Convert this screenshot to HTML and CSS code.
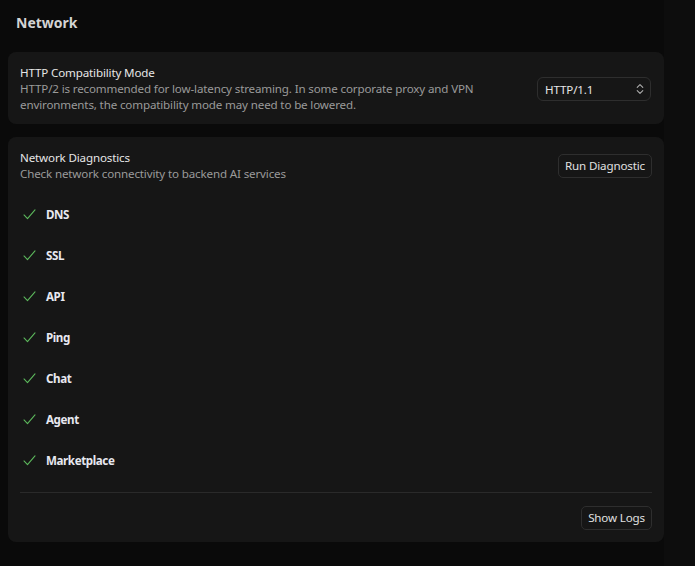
FILE: index.html
```html
<!DOCTYPE html>
<html lang="en">
<head>
  <meta charset="UTF-8">
  <title>Network Settings</title>
  <meta name="viewport" content="width=device-width, initial-scale=1.0">
  <link rel="stylesheet" href="styles.css">
</head>
<body>
  <div class="layout">
    <main class="settings">
      <h2 class="page-title">Network</h2>

      <section class="card card-row">
        <div class="card-text">
          <div class="card-title">HTTP Compatibility Mode</div>
          <div class="card-desc">HTTP/2 is recommended for low-latency streaming. In some corporate proxy and VPN environments, the compatibility mode may need to be lowered.</div>
        </div>
        <div class="select">
          <span>HTTP/1.1</span>
          <svg viewBox="0 0 10 14" fill="none" stroke="currentColor" stroke-width="1.3" stroke-linecap="round" stroke-linejoin="round"><path d="M1.5 5 5 1.5 8.5 5"/><path d="M1.5 9 5 12.5 8.5 9"/></svg>
        </div>
      </section>

      <section class="card">
        <div class="card-row">
          <div class="card-text">
            <div class="card-title">Network Diagnostics</div>
            <div class="card-desc">Check network connectivity to backend AI services</div>
          </div>
          <button class="btn">Run Diagnostic</button>
        </div>

        <ul class="checks">
          <li><svg viewBox="0 0 14 12" fill="none" stroke="currentColor" stroke-width="1.2" stroke-linecap="round" stroke-linejoin="round"><path d="M1 6.5 4.8 10.5 13 1"/></svg>DNS</li>
          <li><svg viewBox="0 0 14 12" fill="none" stroke="currentColor" stroke-width="1.2" stroke-linecap="round" stroke-linejoin="round"><path d="M1 6.5 4.8 10.5 13 1"/></svg>SSL</li>
          <li><svg viewBox="0 0 14 12" fill="none" stroke="currentColor" stroke-width="1.2" stroke-linecap="round" stroke-linejoin="round"><path d="M1 6.5 4.8 10.5 13 1"/></svg>API</li>
          <li><svg viewBox="0 0 14 12" fill="none" stroke="currentColor" stroke-width="1.2" stroke-linecap="round" stroke-linejoin="round"><path d="M1 6.5 4.8 10.5 13 1"/></svg>Ping</li>
          <li><svg viewBox="0 0 14 12" fill="none" stroke="currentColor" stroke-width="1.2" stroke-linecap="round" stroke-linejoin="round"><path d="M1 6.5 4.8 10.5 13 1"/></svg>Chat</li>
          <li><svg viewBox="0 0 14 12" fill="none" stroke="currentColor" stroke-width="1.2" stroke-linecap="round" stroke-linejoin="round"><path d="M1 6.5 4.8 10.5 13 1"/></svg>Agent</li>
          <li><svg viewBox="0 0 14 12" fill="none" stroke="currentColor" stroke-width="1.2" stroke-linecap="round" stroke-linejoin="round"><path d="M1 6.5 4.8 10.5 13 1"/></svg>Marketplace</li>
        </ul>

        <div class="card-footer">
          <button class="btn">Show Logs</button>
        </div>
      </section>
    </main>
    <div class="scroll-track"></div>
  </div>
</body>
</html>
```

FILE: styles.css
```css
html, body {margin:0; padding:0; height:100%;}
body {
  background:#0a0a0a;
  color:#e4e4e4;
  font-family:"Noto Sans", "Open Sans", Arial, sans-serif;
  font-size:11.6px;
  letter-spacing:-0.15px;
  overflow:hidden;
}
.layout {display:flex; height:100vh;}
.settings {flex:1; padding:13px 0 0 8px; min-width:0;}
.scroll-track {width:31px; background:#0d0d0d;}

.page-title {
  margin:0 0 19px 8px;
  font-size:14px; line-height:20px; font-weight:700;
  letter-spacing:0;
  color:#d4d4d4;
}

.card {
  background:#161616;
  border-radius:8px;
  padding:13px 12px 11px;
  margin-bottom:13px;
}
.card-row {display:flex; align-items:center; justify-content:space-between; gap:24px;}
.card > .card-row {align-items:flex-start;}
.card-text {min-width:0;}
.card-title {line-height:16px; color:#e6e6e6;}
.card-desc {line-height:16px; color:#9a9a9a;}

.select {
  flex:0 0 auto;
  width:114px; height:24px; box-sizing:border-box;
  border:1px solid #2e2e2e; border-radius:6px;
  display:flex; align-items:center; justify-content:space-between;
  padding:0 6px 0 7px;
  color:#e6e6e6;
  margin-right:1px;
}
.select svg {width:8px; height:12px; color:#b0b0b0;}

.btn {
  flex:0 0 auto;
  height:24px;
  padding:0 6px;
  background:transparent;
  border:1px solid #2e2e2e; border-radius:5px;
  color:#e0e0e0;
  font:inherit; letter-spacing:inherit; line-height:20px;
  margin-top:4px;
}

.checks {
  list-style:none; margin:22px 0 0; padding:0;
  display:flex; flex-direction:column; gap:21px;
}
.checks li {
  display:flex; align-items:center; gap:10px;
  height:20px; padding-left:3px;
  font-weight:700; letter-spacing:-0.4px; color:#e8e8f0;
}
.checks svg {width:13px; height:11px; color:#5cb85c;}

.card-footer {
  margin-top:22px;
  border-top:1px solid #2a2a2a;
  padding:13px 0 1px;
  display:flex; justify-content:flex-end;
}
.card-footer .btn {margin-top:0;}
```
